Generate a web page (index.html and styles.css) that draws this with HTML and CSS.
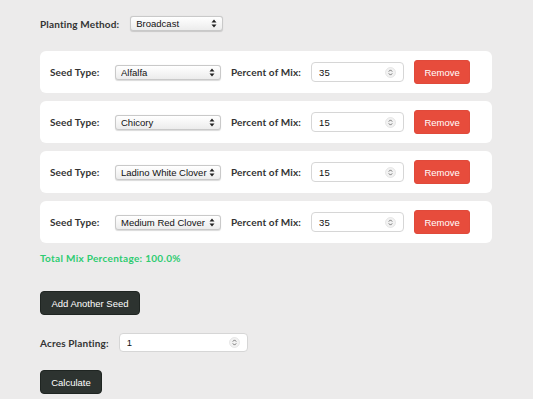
FILE: index.html
```html
<!DOCTYPE html>
<html lang="en">
<head>
  <meta charset="UTF-8" />
  <title>Seed Mix Calculator</title>
  <link rel="stylesheet" href="styles.css">
</head>
<body>
  <div class="container">
    <div class="method-row">
      <label class="label">Planting Method:</label>
      <select class="select method-select">
        <option>Broadcast</option>
      </select>
    </div>

    <div class="seed-list">
      <div class="seed-card">
        <label class="label seed-label">Seed Type:</label>
        <select class="select seed-select"><option>Alfalfa</option></select>
        <label class="label">Percent of Mix:</label>
        <input class="number" type="text" value="35">
        <button class="btn-remove">Remove</button>
      </div>
      <div class="seed-card">
        <label class="label seed-label">Seed Type:</label>
        <select class="select seed-select"><option>Chicory</option></select>
        <label class="label">Percent of Mix:</label>
        <input class="number" type="text" value="15">
        <button class="btn-remove">Remove</button>
      </div>
      <div class="seed-card">
        <label class="label seed-label">Seed Type:</label>
        <select class="select seed-select"><option>Ladino White Clover</option></select>
        <label class="label">Percent of Mix:</label>
        <input class="number" type="text" value="15">
        <button class="btn-remove">Remove</button>
      </div>
      <div class="seed-card">
        <label class="label seed-label">Seed Type:</label>
        <select class="select seed-select"><option>Medium Red Clover</option></select>
        <label class="label">Percent of Mix:</label>
        <input class="number" type="text" value="35">
        <button class="btn-remove">Remove</button>
      </div>
    </div>

    <p class="total">Total Mix Percentage: 100.0%</p>

    <button class="btn-dark add-btn">Add Another Seed</button>

    <div class="acres-row">
      <label class="label">Acres Planting:</label>
      <input class="number acres-input" type="text" value="1">
    </div>

    <button class="btn-dark calc-btn">Calculate</button>
  </div>
</body>
</html>
```

FILE: styles.css
```css
body {
  margin: 0;
  background-color: #ecebeb;
  font-family: "Liberation Sans", Arial, sans-serif;
}

.container {
  padding: 16px 40px 0;
}

.label {
  font-family: Lato, "Open Sans", sans-serif;
  font-weight: bold;
  font-size: 10px;
  color: #333;
  letter-spacing: 0.15px;
  white-space: nowrap;
}

.method-row {
  display: flex;
  align-items: center;
  gap: 11px;
}

.select {
  -webkit-appearance: none;
  appearance: none;
  height: 15px;
  padding: 0 12px 0 5px;
  font-family: "Liberation Sans", Arial, sans-serif;
  font-size: 9.5px;
  color: #111;
  border: 1px solid #c9c9c9;
  border-radius: 3px;
  background-color: #f4f4f4;
  background-image: url("data:image/svg+xml;utf8,<svg xmlns='http://www.w3.org/2000/svg' width='6' height='9' viewBox='0 0 6 9'><path d='M3 0.5 L5.5 3.5 H0.5 Z M3 8.5 L5.5 5.5 H0.5 Z' fill='%23222'/></svg>"), linear-gradient(#ffffff, #ececec);
  background-repeat: no-repeat;
  background-position: right 5px center, 0 0;
  box-shadow: 0 0.5px 1px rgba(0, 0, 0, 0.15);
}

.method-select {
  width: 93px;
}

.seed-list {
  margin-top: 20px;
  display: flex;
  flex-direction: column;
  gap: 8px;
  width: 452px;
}

.seed-card {
  display: flex;
  align-items: center;
  gap: 10px;
  height: 42px;
  padding: 0 10px;
  background: white;
  border-radius: 6px;
}

.seed-label {
  width: 55px;
}

.seed-select {
  width: 106px;
}

.number {
  box-sizing: border-box;
  height: 20px;
  width: 93px;
  padding: 0 20px 0 7px;
  font-family: "Liberation Sans", Arial, sans-serif;
  font-size: 9.5px;
  color: #111;
  border: 1px solid #d6d6d6;
  border-radius: 4px;
  background: white url("data:image/svg+xml;utf8,<svg xmlns='http://www.w3.org/2000/svg' width='11' height='11' viewBox='0 0 11 11'><circle cx='5.5' cy='5.5' r='5' fill='%23f2f2f2' stroke='%23dcdcdc' stroke-width='0.6'/><path d='M3.8 4.6 L5.5 2.9 L7.2 4.6 M3.8 6.4 L5.5 8.1 L7.2 6.4' fill='none' stroke='%23666' stroke-width='0.9'/></svg>") no-repeat right 7px center;
  outline: none;
}

.btn-remove {
  width: 56px;
  height: 24px;
  border: 1px solid #e04a3b;
  border-radius: 3px;
  background-color: #e74c3c;
  color: white;
  font-family: "Liberation Sans", Arial, sans-serif;
  font-size: 9.5px;
  cursor: pointer;
}

.total {
  margin: 9px 0 0;
  font-family: Lato, "Open Sans", sans-serif;
  font-weight: bold;
  font-size: 10px;
  color: #2ecc71;
  letter-spacing: 0.3px;
}

.btn-dark {
  display: block;
  height: 24px;
  padding: 0;
  border: 1px solid #1f2522;
  border-radius: 4px;
  background-color: #2d3330;
  color: white;
  font-family: "Liberation Sans", Arial, sans-serif;
  font-size: 9.5px;
  white-space: nowrap;
  cursor: pointer;
}

.add-btn {
  margin-top: 27px;
  width: 100px;
}

.acres-row {
  display: flex;
  align-items: center;
  gap: 10px;
  margin-top: 18px;
}

.acres-input {
  width: 129px;
  height: 19px;
}

.calc-btn {
  margin-top: 18px;
  width: 62px;
}
```
